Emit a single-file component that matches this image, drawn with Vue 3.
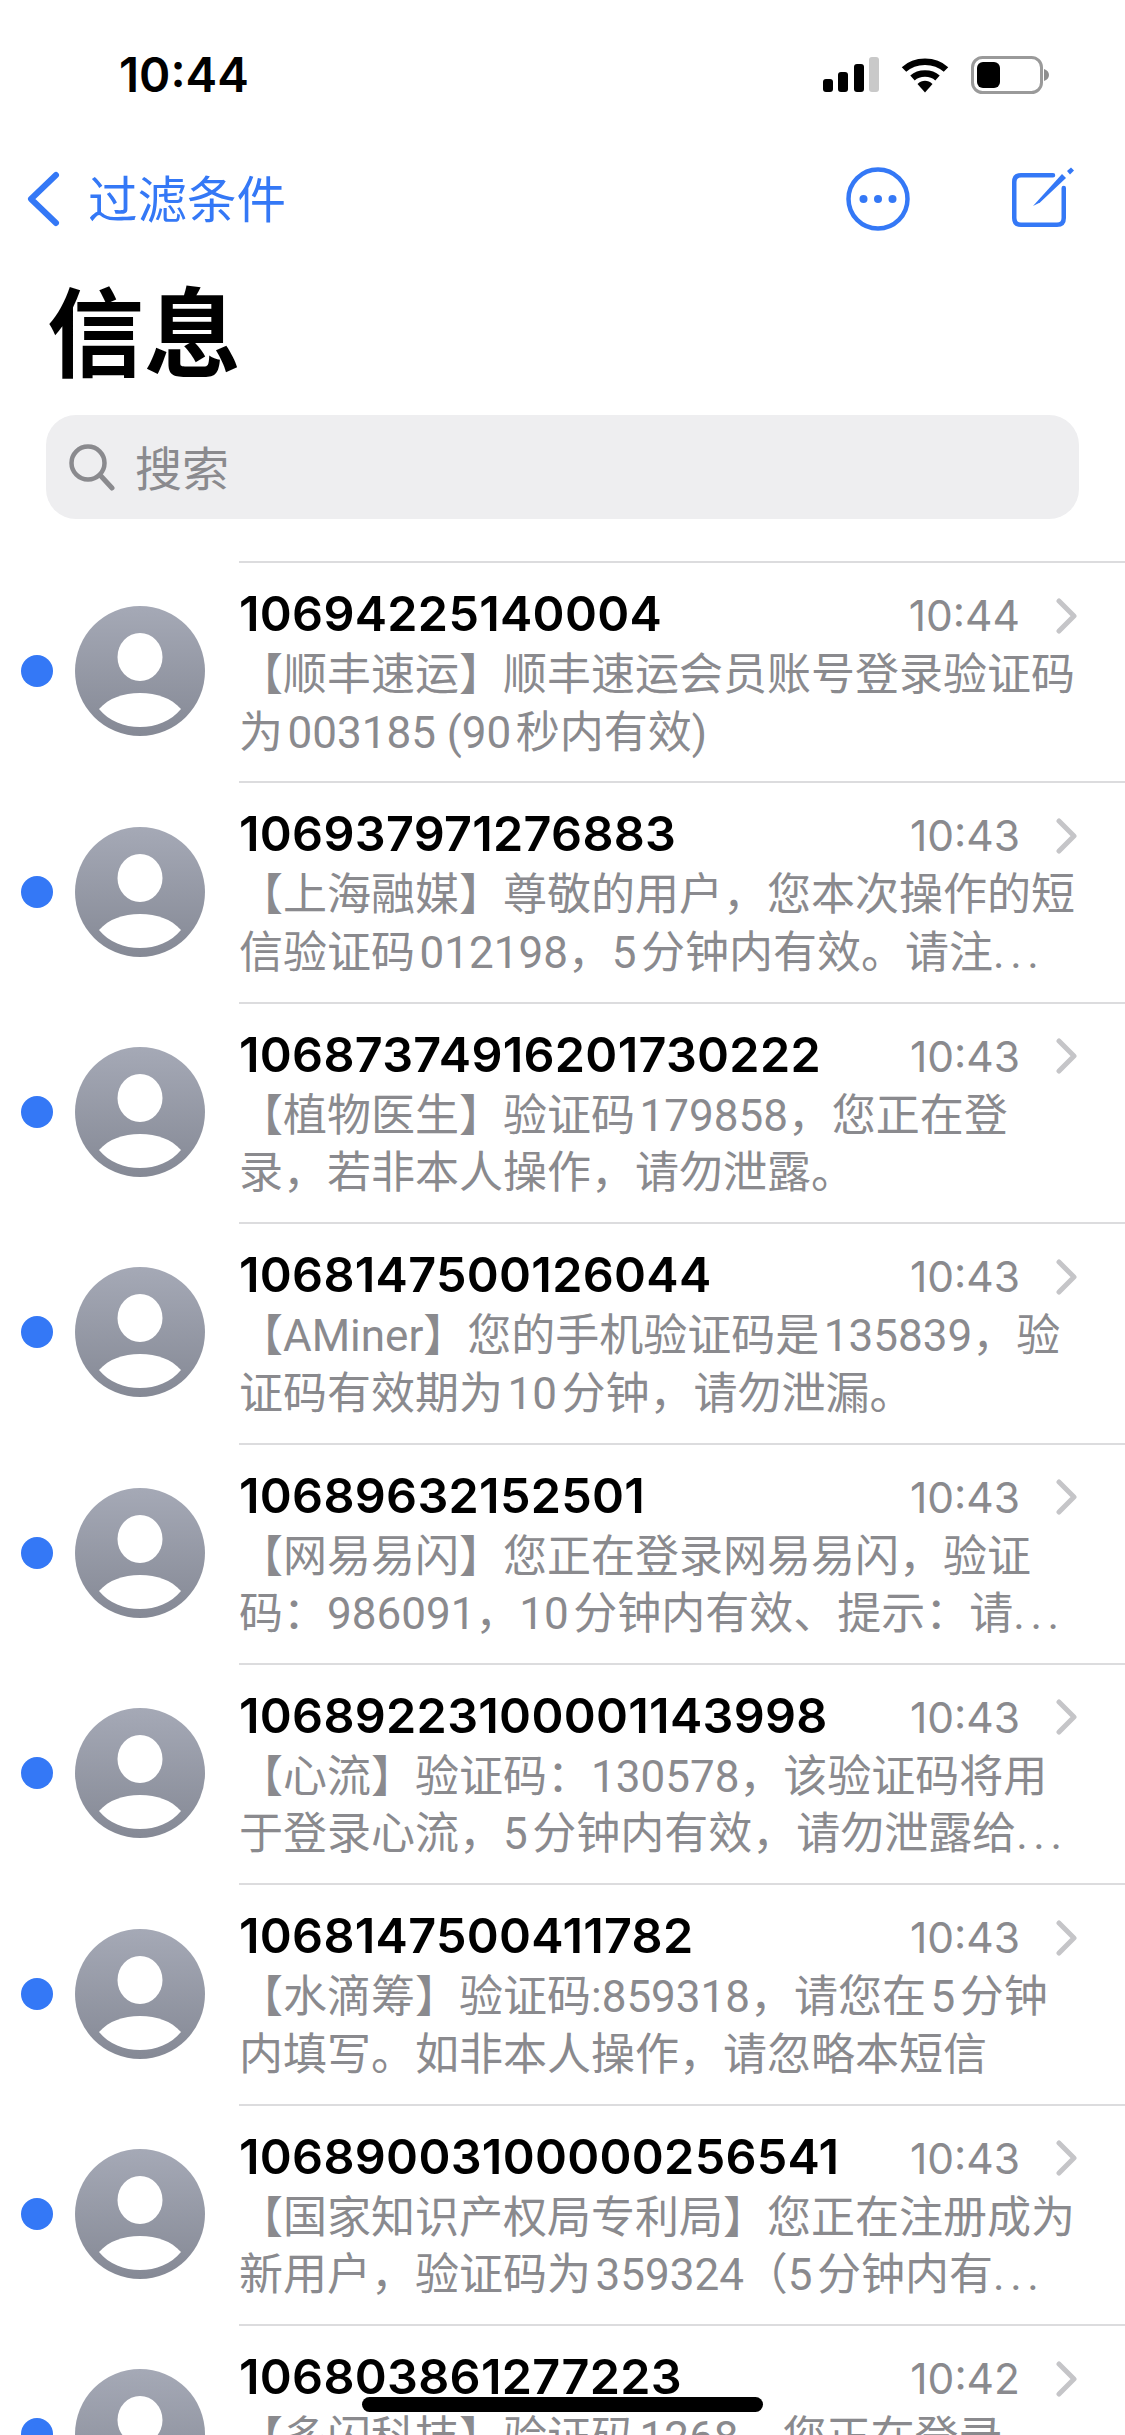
<script setup>
const messages = [
  { name: '10694225140004', time: '10:44', lines: ['【顺丰速运】顺丰速运会员账号登录验证码', '为\u200A003185 (90\u200A秒内有效)'] },
  { name: '106937971276883', time: '10:43', lines: ['【上海融媒】尊敬的用户，您本次操作的短', '信验证码\u200A012198，5\u200A分钟内有效。请注…'] },
  { name: '10687374916201730222', time: '10:43', lines: ['【植物医生】验证码\u200A179858，您正在登', '录，若非本人操作，请勿泄露。'] },
  { name: '1068147500126044', time: '10:43', lines: ['【AMiner】您的手机验证码是\u200A135839，验', '证码有效期为\u200A10\u200A分钟，请勿泄漏。'] },
  { name: '10689632152501', time: '10:43', lines: ['【网易易闪】您正在登录网易易闪，验证', '码：986091，10\u200A分钟内有效、提示：请…'] },
  { name: '10689223100001143998', time: '10:43', lines: ['【心流】验证码：130578，该验证码将用', '于登录心流，5\u200A分钟内有效，请勿泄露给…'] },
  { name: '1068147500411782', time: '10:43', lines: ['【水滴筹】验证码:859318，请您在\u200A5\u200A分钟', '内填写。如非本人操作，请忽略本短信'] },
  { name: '10689003100000256541', time: '10:43', lines: ['【国家知识产权局专利局】您正在注册成为', '新用户，验证码为\u200A359324（5\u200A分钟内有…'] },
  { name: '106803861277223', time: '10:42', lines: ['【多闪科技】验证码\u200A1268，您正在登录'] },
]
</script>

<template>
  <div class="screen">
    <div class="status">
      <span class="clock">10:44</span>
      <div class="status-icons">
        <svg width="56" height="36" viewBox="0 0 56 36">
          <rect x="0" y="22" width="10" height="13" rx="3" fill="#000" />
          <rect x="15" y="15" width="10" height="20" rx="3" fill="#000" />
          <rect x="31" y="7" width="10" height="28" rx="3" fill="#000" />
          <rect x="46" y="0" width="10" height="35" rx="3" fill="#c9c9c9" />
        </svg>
        <svg width="48" height="36" viewBox="0 0 48 36">
          <path d="M3 12.500C14 2 34 2 45 12.500" fill="none" stroke="#000" stroke-width="6.500" />
          <path d="M11.500 21C18 15 30 15 36.500 21" fill="none" stroke="#000" stroke-width="6.500" />
          <path d="M16.500 27C21 22.800 27 22.800 31.500 27L24 35.500Z" fill="#000" />
        </svg>
        <svg width="78" height="38" viewBox="0 0 78 38">
          <rect x="1.500" y="1.500" width="69" height="35" rx="10" fill="none" stroke="#9a9a9a" stroke-width="3" />
          <rect x="6" y="6" width="23" height="26" rx="6" fill="#000" />
          <path d="M73 13C76 14 78 16 78 19C78 22 76 24 73 25Z" fill="#8e8e8e" />
        </svg>
      </div>
    </div>

    <div class="nav">
      <div class="back">
        <svg width="36" height="60" viewBox="0 0 36 60">
          <path d="M30 6L5 30L30 54" fill="none" stroke="#3478f6" stroke-width="6" stroke-linecap="round" stroke-linejoin="round" />
        </svg>
        <span class="back-label">过滤条件</span>
      </div>
      <div class="nav-actions">
        <svg width="64" height="64" viewBox="0 0 64 64">
          <circle cx="32" cy="32" r="29.500" fill="none" stroke="#3478f6" stroke-width="4.500" />
          <circle cx="17.500" cy="32" r="4" fill="#3478f6" />
          <circle cx="32" cy="32" r="4" fill="#3478f6" />
          <circle cx="46.500" cy="32" r="4" fill="#3478f6" />
        </svg>
        <svg width="62" height="64" viewBox="0 0 62 64">
          <path d="M41 8.250H9C4.500 8.250 2.250 10.500 2.250 15V51C2.250 55.500 4.500 57.750 9 57.750H45C49.500 57.750 51.750 55.500 51.750 51V21" fill="none" stroke="#3478f6" stroke-width="4.500" stroke-linecap="round" />
          <path d="M50 7L21 39L28 35.500L54 11Z" fill="#3478f6" />
          <path d="M55 4L59 0.500L62 3.500L58 7.500Z" fill="#3478f6" />
        </svg>
      </div>
    </div>

    <h1 class="title">信息</h1>

    <div class="search">
      <svg width="48" height="48" viewBox="0 0 48 48">
        <circle cx="20" cy="20" r="16.500" fill="none" stroke="#8a8a8e" stroke-width="4.500" />
        <path d="M32 32L44 45" fill="none" stroke="#8a8a8e" stroke-width="5" stroke-linecap="round" />
      </svg>
      <span class="search-label">搜索</span>
    </div>

    <ul class="list">
      <li v-for="msg in messages" :key="msg.name" class="row">
        <span class="dot"></span>
        <svg class="avatar" width="130" height="130" viewBox="0 0 130 130">
          <defs>
            <linearGradient id="av" x1="0" y1="0" x2="0" y2="1">
              <stop offset="0" stop-color="#a5a9b6" />
              <stop offset="1" stop-color="#858995" />
            </linearGradient>
          </defs>
          <circle cx="65" cy="65" r="65" fill="url(#av)" />
          <ellipse cx="65" cy="51" rx="22.500" ry="24" fill="#fff" />
          <path d="M24 103C34 92 48 87 65 87C82 87 96 92 106 103C96 115 81 121 65 121C49 121 34 115 24 103Z" fill="#fff" />
        </svg>
        <div class="body">
          <div class="head">
            <span class="name">{{ msg.name }}</span>
            <span class="time">{{ msg.time }}</span>
            <svg class="chev" width="22" height="36" viewBox="0 0 22 36">
              <path d="M3 3L18 18L3 33" fill="none" stroke="#c5c5c8" stroke-width="5" stroke-linecap="round" stroke-linejoin="round" />
            </svg>
          </div>
          <div v-for="line in msg.lines" :key="line" class="line">{{ line.replace('…', '') }}<span v-if="line.endsWith('…')" class="more">...</span></div>
        </div>
      </li>
    </ul>

    <div class="home-bar"></div>
  </div>
</template>

<style>
html, body {
  margin: 0;
  background: #fff;
}
</style>

<style scoped>
.screen {
  position: relative;
  width: 1125px;
  height: 2435px;
  overflow: hidden;
  background: #fff;
  font-family: Inter, "Noto Sans CJK SC", sans-serif;
  color: #000;
}

.status {
  height: 150px;
  box-sizing: border-box;
  padding: 52px 76px 0 119px;
  display: flex;
  justify-content: space-between;
  align-items: flex-start;
}
.clock {
  font-size: 47.500px;
  font-weight: 600;
  line-height: 46px;
}
.status-icons {
  display: flex;
  align-items: center;
  gap: 22px;
  padding-top: 4px;
}

.nav {
  height: 80px;
  padding: 9px 51px 0 26px;
  display: flex;
  justify-content: space-between;
  align-items: center;
}
.back {
  display: flex;
  align-items: center;
  gap: 26px;
  color: #3478f6;
  font-size: 49.500px;
}
.back-label {
  margin-bottom: 5px;
}
.nav-actions {
  display: flex;
  align-items: center;
  gap: 102px;
}

.title {
  margin: 40px 0 0 47px;
  font-size: 97px;
  line-height: 110px;
  font-weight: 700;
}

.search {
  margin: 26px 46px 0;
  height: 104px;
  border-radius: 30px;
  background: #eeeef0;
  display: flex;
  align-items: center;
  padding-left: 22px;
  gap: 19px;
  color: #8a8a8e;
  font-size: 47px;
}
.search-label {
  margin-bottom: 3px;
}

.list {
  list-style: none;
  margin: 42px 0 0;
  padding: 0;
}
.row {
  display: flex;
  align-items: center;
  height: 220.400px;
  padding-left: 21px;
}
.dot {
  width: 32px;
  height: 32px;
  border-radius: 50%;
  background: #3478f6;
  flex: none;
}
.avatar {
  flex: none;
  margin-left: 22px;
}
.body {
  flex: 1;
  margin-left: 34px;
  height: 100%;
  box-sizing: border-box;
  border-top: 2px solid #dcdcde;
  padding: 21px 48px 0 0;
}
.head {
  display: flex;
  align-items: baseline;
  height: 63px;
}
.name {
  flex: 1;
  font-size: 48.500px;
  font-weight: 600;
  letter-spacing: 0.300px;
}
.time {
  font-size: 42.500px;
  color: #8a8a8e;
  margin-left: -2px;
}
.chev {
  align-self: center;
  margin-left: 36px;
  margin-right: -1px;
}
.line {
  font-family: Roboto, "Noto Sans CJK SC", sans-serif;
  font-size: 44px;
  line-height: 57.500px;
  color: #8a8a8e;
  white-space: nowrap;
}
.more {
  letter-spacing: 5.500px;
}

.home-bar {
  position: absolute;
  left: 362px;
  top: 2397px;
  width: 401px;
  height: 15px;
  border-radius: 8px;
  background: #000;
}
</style>
